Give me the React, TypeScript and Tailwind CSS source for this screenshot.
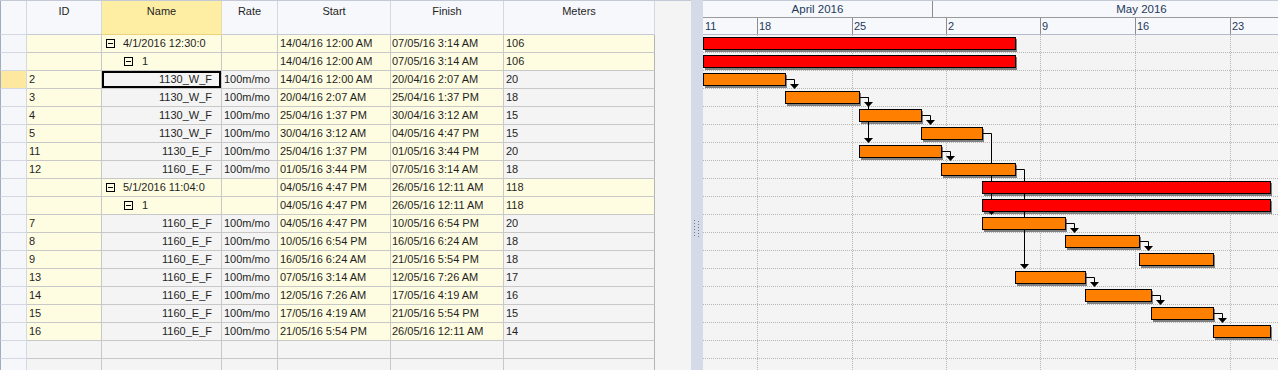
import React from "react";

type Row = {
  level?: 1 | 2;
  id?: string;
  name: string;
  rate?: string;
  start: string;
  finish: string;
  meters: string;
};

const rows: Row[] = [
  { level: 1, name: "4/1/2016 12:30:0", start: "14/04/16 12:00 AM", finish: "07/05/16 3:14 AM", meters: "106" },
  { level: 2, name: "1", start: "14/04/16 12:00 AM", finish: "07/05/16 3:14 AM", meters: "106" },
  { id: "2", name: "1130_W_F", rate: "100m/mo", start: "14/04/16 12:00 AM", finish: "20/04/16 2:07 AM", meters: "20" },
  { id: "3", name: "1130_W_F", rate: "100m/mo", start: "20/04/16 2:07 AM", finish: "25/04/16 1:37 PM", meters: "18" },
  { id: "4", name: "1130_W_F", rate: "100m/mo", start: "25/04/16 1:37 PM", finish: "30/04/16 3:12 AM", meters: "15" },
  { id: "5", name: "1130_W_F", rate: "100m/mo", start: "30/04/16 3:12 AM", finish: "04/05/16 4:47 PM", meters: "15" },
  { id: "11", name: "1130_E_F", rate: "100m/mo", start: "25/04/16 1:37 PM", finish: "01/05/16 3:44 PM", meters: "20" },
  { id: "12", name: "1160_E_F", rate: "100m/mo", start: "01/05/16 3:44 PM", finish: "07/05/16 3:14 AM", meters: "18" },
  { level: 1, name: "5/1/2016 11:04:0", start: "04/05/16 4:47 PM", finish: "26/05/16 12:11 AM", meters: "118" },
  { level: 2, name: "1", start: "04/05/16 4:47 PM", finish: "26/05/16 12:11 AM", meters: "118" },
  { id: "7", name: "1160_E_F", rate: "100m/mo", start: "04/05/16 4:47 PM", finish: "10/05/16 6:54 PM", meters: "20" },
  { id: "8", name: "1160_E_F", rate: "100m/mo", start: "10/05/16 6:54 PM", finish: "16/05/16 6:24 AM", meters: "18" },
  { id: "9", name: "1160_E_F", rate: "100m/mo", start: "16/05/16 6:24 AM", finish: "21/05/16 5:54 PM", meters: "18" },
  { id: "13", name: "1160_E_F", rate: "100m/mo", start: "07/05/16 3:14 AM", finish: "12/05/16 7:26 AM", meters: "17" },
  { id: "14", name: "1160_E_F", rate: "100m/mo", start: "12/05/16 7:26 AM", finish: "17/05/16 4:19 AM", meters: "16" },
  { id: "15", name: "1160_E_F", rate: "100m/mo", start: "17/05/16 4:19 AM", finish: "21/05/16 5:54 PM", meters: "15" },
  { id: "16", name: "1160_E_F", rate: "100m/mo", start: "21/05/16 5:54 PM", finish: "26/05/16 12:11 AM", meters: "14" },
];

// finish-to-start links, by row index
const links: [number, number][] = [
  [2, 3], [3, 4], [3, 6], [4, 5], [5, 10], [6, 7], [7, 13],
  [10, 11], [11, 12], [13, 14], [14, 15], [15, 16],
];

const SELECTED = 2;
const DAY = 13.5;
const ROW_H = 18;
const weekLines = [54, 149, 243, 337, 432, 527];

// x offset inside the chart, chart starts at 14/04/16 00:00
function toX(s: string) {
  const [date, time, ap] = s.split(" ");
  const [dd, mm] = date.split("/").map(Number);
  let [h, m] = time.split(":").map(Number);
  if (h === 12) h = 0;
  if (ap === "PM") h += 12;
  const day = mm === 4 ? dd - 14 : dd + 16;
  return Math.round((day + (h + m / 60) / 24) * DAY);
}

const YEL = "bg-[#fffde1]";
const GRY = "bg-[#f4f4f4]";
const cell = "h-full border-r border-b border-[#c8c8c8] truncate whitespace-nowrap";

function Toggle() {
  return (
    <span className="relative w-[9px] h-[9px] border border-black shrink-0">
      <span className="absolute left-[1px] top-[3px] w-[5px] h-px bg-black" />
    </span>
  );
}

function GridRow({ row, index }: { row?: Row; index: number }) {
  const empty = !row;
  const group = !!row?.level;
  const sel = index === SELECTED;
  const soft = empty ? GRY : YEL;
  const hard = empty ? GRY : group ? YEL : GRY;

  return (
    <div className="flex h-[18px] shrink-0">
      <div
        className={`w-[27px] h-full border-l border-l-[#a3abbe] border-r border-b border-[#d3d8e2] ${
          sel ? "bg-[#fde8a0]" : "bg-[#f5f7fb]"
        }`}
      />
      <div className={`w-[75px] pl-[2px] ${cell} ${soft}`}>{row?.id}</div>
      <div
        className={`w-[120px] ${cell} ${hard} ${
          sel ? "shadow-[inset_0_0_0_2px_#000]" : ""
        }`}
      >
        {row?.level === 1 && (
          <div className="flex items-center h-full pl-[4px] gap-[8px]">
            <Toggle />
            <span>{row.name}</span>
          </div>
        )}
        {row?.level === 2 && (
          <div className="flex items-center h-full pl-[22px] gap-[9px]">
            <Toggle />
            <span>{row.name}</span>
          </div>
        )}
        {row && !group && <div className="text-right pr-[9px]">{row.name}</div>}
      </div>
      <div className={`w-[56px] pl-[2px] ${cell} ${hard}`}>{row?.rate}</div>
      <div className={`w-[113px] pl-[2px] ${cell} ${soft}`}>{row?.start}</div>
      <div className={`w-[113px] pl-[1px] ${cell} ${soft}`}>{row?.finish}</div>
      <div className={`w-[151px] pl-[2px] ${cell} border-r-[#b4b4b4] ${hard}`}>{row?.meters}</div>
    </div>
  );
}

function Grid() {
  const heads = [
    { w: "w-[75px]", t: "ID" },
    { w: "w-[120px]", t: "Name", on: true },
    { w: "w-[56px]", t: "Rate" },
    { w: "w-[113px]", t: "Start" },
    { w: "w-[113px]", t: "Finish" },
    { w: "w-[151px]", t: "Meters" },
  ];
  return (
    <div className="w-[655px] flex flex-col border-t border-[#c3c9d6]">
      <div className="flex h-[34px] shrink-0">
        <div className="w-[27px] h-full border-l border-l-[#a3abbe] border-r border-b border-[#d3d8e2] bg-[#f7f8fc]" />
        {heads.map((h) => (
          <div
            key={h.t}
            className={`${h.w} h-full pt-[2px] text-center border-r border-b ${
              h.on
                ? "bg-[#fdeea3] border-b-[#efd27c] border-r-[#e8dca8]"
                : "bg-[#f7f8fc] border-[#d3d8e2] border-b-[#c5cad6]"
            }`}
          >
            {h.t}
          </div>
        ))}
      </div>
      {rows.map((r, i) => (
        <GridRow key={i} row={r} index={i} />
      ))}
      <GridRow index={rows.length} />
      <GridRow index={rows.length + 1} />
    </div>
  );
}

function Splitter() {
  const dots: [number, number][] = [];
  for (let i = 0; i < 6; i++) {
    dots.push([0, i * 3]);
    dots.push([4, i * 3 + 1]);
  }
  return (
    <div className="w-[12px] bg-[#d4dae8] flex items-center justify-center">
      <svg width="6" height="18" className="mt-[88px]">
        {dots.map(([x, y], i) => (
          <rect key={i} x={x} y={y} width="1" height="1" fill="#6d7894" />
        ))}
      </svg>
    </div>
  );
}

function Chart() {
  const bodyRows = rows.length + 2;
  const H = 335;
  return (
    <div className="w-[575px] flex flex-col border-t border-[#c3c9d6] overflow-hidden text-[#1e395b]">
      <div className="flex h-[17px] shrink-0 bg-[#f7f8fc] border-b border-[#9a9a9a]">
        <div className="w-[230px] shrink-0 border-r border-[#8c8c8c] text-center leading-[16px] text-[11.5px]">
          April 2016
        </div>
        <div className="w-[417px] shrink-0 text-center leading-[16px] text-[11.5px]">May 2016</div>
      </div>
      <div className="flex h-[17px] shrink-0 bg-[#f7f8fc] border-b border-[#b4bbcc] leading-[16px]">
        <div className="w-[54px] shrink-0 pl-[2px]">11</div>
        <div className="w-[95px] shrink-0 border-l border-[#8c8c8c] pl-[1px]">18</div>
        <div className="w-[94px] shrink-0 border-l border-[#8c8c8c] pl-[1px]">25</div>
        <div className="w-[94px] shrink-0 border-l border-[#8c8c8c] pl-[1px]">2</div>
        <div className="w-[95px] shrink-0 border-l border-[#8c8c8c] pl-[1px]">9</div>
        <div className="w-[95px] shrink-0 border-l border-[#8c8c8c] pl-[1px]">16</div>
        <div className="w-[60px] shrink-0 border-l border-[#8c8c8c] pl-[1px]">23</div>
      </div>
      <svg width="575" height={H} className="block bg-[#f4f4f4]">
        {Array.from({ length: bodyRows }).map((_, i) => (
          <line
            key={"h" + i}
            x1="0"
            x2="575"
            y1={i * ROW_H + 17.5}
            y2={i * ROW_H + 17.5}
            stroke="#b5b5b5"
            strokeDasharray="1 1"
          />
        ))}
        {weekLines.map((x) => (
          <line
            key={"v" + x}
            x1={x + 0.5}
            x2={x + 0.5}
            y1="0"
            y2={H}
            stroke="#b5b5b5"
            strokeDasharray="1 1"
          />
        ))}
        {rows.map((r, i) => {
          const x1 = toX(r.start);
          const x2 = toX(r.finish);
          return (
            <rect key={"s" + i} x={x1 + 2} y={i * ROW_H + 4} width={x2 - x1} height="13" fill="#808080" />
          );
        })}
        {links.map(([a, b], i) => {
          const xe = toX(rows[a].finish);
          const ym = a * ROW_H + 8.5;
          const cx = xe + 9.5;
          const top = b * ROW_H;
          return (
            <g key={"l" + i}>
              <line x1={xe} x2={cx} y1={ym} y2={ym} stroke="#000" />
              <line x1={cx} x2={cx} y1={ym} y2={top - 4} stroke="#000" />
              <polygon points={`${cx - 4.5},${top - 5} ${cx + 4.5},${top - 5} ${cx},${top}`} fill="#000" />
            </g>
          );
        })}
        {rows.map((r, i) => {
          const x1 = toX(r.start);
          const x2 = toX(r.finish);
          return (
            <rect
              key={"b" + i}
              x={x1 + 0.5}
              y={i * ROW_H + 2.5}
              width={x2 - x1}
              height="12"
              fill={r.level ? "#ff0000" : "#ff8000"}
              stroke="#000"
            />
          );
        })}
      </svg>
    </div>
  );
}

export default function App() {
  return (
    <div className="w-[1278px] h-[370px] overflow-hidden flex bg-[#f4f4f4] font-['Liberation_Sans',Arial,sans-serif] text-[11px] leading-[17px] text-[#1f1f1f]">
      <Grid />
      <div className="w-[36px] border-t border-[#c3c9d6] bg-[#f4f4f4]" />
      <Splitter />
      <Chart />
    </div>
  );
}
